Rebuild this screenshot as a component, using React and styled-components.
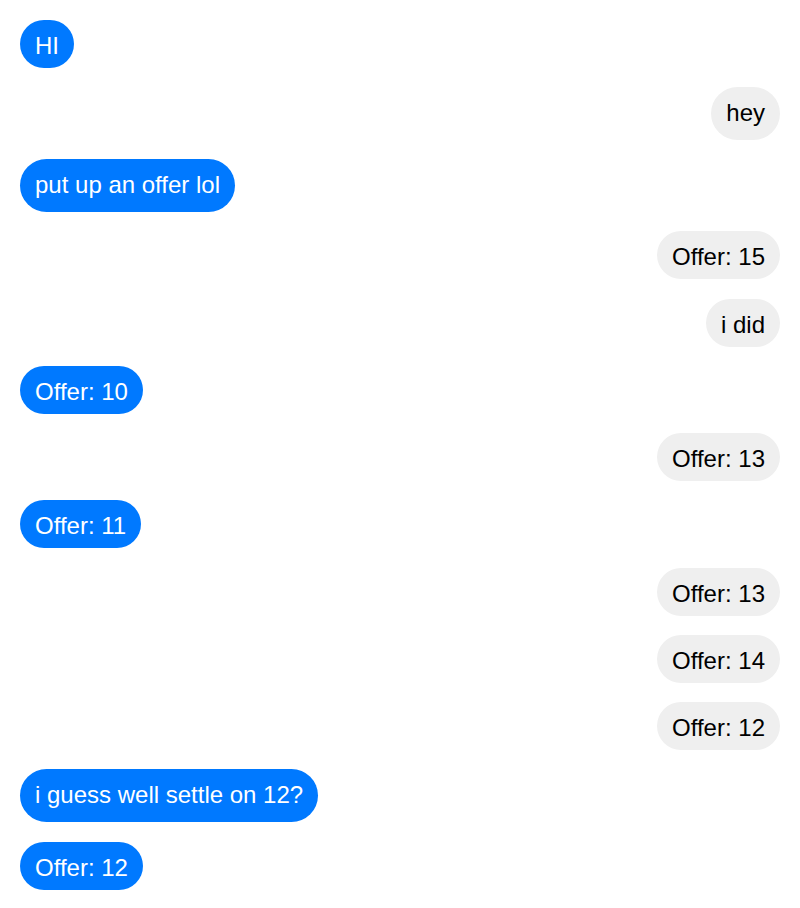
import React from 'react';
import styled, { createGlobalStyle } from 'styled-components';

const GlobalStyle = createGlobalStyle`
  body {
    margin: 0;
    background: #fff;
    font-family: "Liberation Sans", Arial, sans-serif;
  }
`;

const Thread = styled.main`
  display: flex;
  flex-direction: column;
  gap: 19.25px;
  padding: 19.5px 20px;
`;

const Row = styled.div`
  display: flex;
  justify-content: ${props => (props.mine ? 'flex-end' : 'flex-start')};
`;

const Bubble = styled.div`
  font-size: 24px;
  line-height: 28px;
  padding: ${props => (props.tall ? '12px 15px 13px' : '12px 15px 8px')};
  border-radius: 30px;
  background: ${props => (props.mine ? '#efefef' : '#0079ff')};
  color: ${props => (props.mine ? '#000' : '#fff')};
  white-space: nowrap;
`;

const messages = [
  { text: 'HI' },
  { text: 'hey', mine: true, tall: true },
  { text: 'put up an offer lol', tall: true },
  { text: 'Offer: 15', mine: true },
  { text: 'i did', mine: true },
  { text: 'Offer: 10' },
  { text: 'Offer: 13', mine: true },
  { text: 'Offer: 11' },
  { text: 'Offer: 13', mine: true },
  { text: 'Offer: 14', mine: true },
  { text: 'Offer: 12', mine: true },
  { text: 'i guess well settle on 12?', tall: true },
  { text: 'Offer: 12' },
];

export default function App() {
  return (
    <>
      <GlobalStyle />
      <Thread>
        {messages.map((m, i) => (
          <Row key={i} mine={m.mine}>
            <Bubble mine={m.mine} tall={m.tall}>{m.text}</Bubble>
          </Row>
        ))}
      </Thread>
    </>
  );
}
